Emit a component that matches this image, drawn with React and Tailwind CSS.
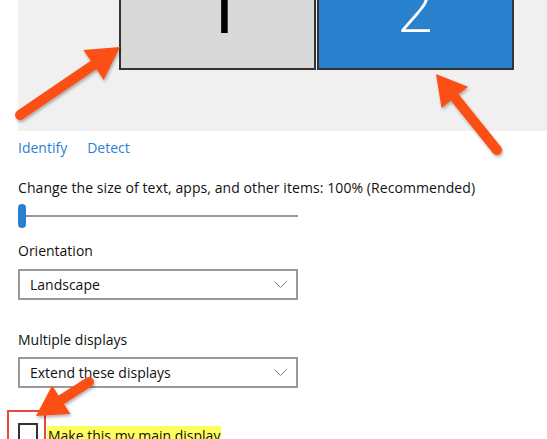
import { ChevronDown } from 'lucide-react';

function Arrow({ tail, tip, head = 30, half = 17 }) {
    const dx = tip[0] - tail[0];
    const dy = tip[1] - tail[1];
    const len = Math.hypot(dx, dy);
    const ux = dx / len;
    const uy = dy / len;
    const bx = tip[0] - ux * head;
    const by = tip[1] - uy * head;
    const nx = -uy;
    const ny = ux;
    const pts = `${tip[0]},${tip[1]} ${bx + nx * half},${by + ny * half} ${bx - nx * half},${by - ny * half}`;
    return (
        <g filter="url(#arrowShadow)">
            <line x1={tail[0]} y1={tail[1]} x2={bx + ux * 4} y2={by + uy * 4} stroke="#fb5017" strokeWidth="10" strokeLinecap="round" />
            <polygon points={pts} fill="#fb5017" strokeLinejoin="round" />
        </g>
    );
}

function Dropdown({ value }) {
    return (
        <div className="w-[280px] h-[31px] border-2 border-[#999999] flex items-center justify-between pl-[10px] pr-[9px]">
            <span className="text-[14px] leading-[20px] text-[#111]">{value}</span>
            <svg width="13" height="8" viewBox="0 0 13 8">
                <polyline points="0.5,0.5 6.5,6.5 12.5,0.5" fill="none" stroke="#7a7a7a" strokeWidth="1" />
            </svg>
        </div>
    );
}

export default function App() {
    return (
        <div className="relative w-[547px] h-[439px] overflow-hidden bg-white font-['Open_Sans',sans-serif] text-[#111]">
            {/* Monitor arrangement */}
            <div className="ml-[18px] h-[131px] bg-[#f0f0f0] flex items-start pl-[101px]">
                <div className="w-[197px] h-[70px] border-x-2 border-b-2 border-[#333] bg-[#d9d9d9] overflow-hidden flex justify-center">
                    <span className="mt-[-29px] pl-[4px] text-[72px] leading-none font-['Inter',sans-serif] font-normal text-black">1</span>
                </div>
                <div className="ml-[1px] w-[197px] h-[70px] border-x-2 border-b-2 border-[#333] bg-[#2a82ce] overflow-hidden flex justify-center">
                    <span className="mt-[-23px] text-[64px] leading-none font-['Inter',sans-serif] font-extralight text-white">2</span>
                </div>
            </div>

            <div className="pl-[18px]">
                <div className="mt-[7px] flex gap-[20px] text-[14px] leading-[20px] text-[#2b7fd3]">
                    <span>Identify</span>
                    <span>Detect</span>
                </div>

                <p className="mt-[20px] text-[14px] leading-[20px] tracking-[0.08px]">
                    Change the size of text, apps, and other items: 100% (Recommended)
                </p>

                <div className="mt-[6px] w-[280px] h-[24px] flex items-center">
                    <div className="w-[8px] h-[24px] rounded-[4px] bg-[#2b7fd0]" />
                    <div className="flex-1 h-[2px] bg-[#999999]" />
                </div>

                <p className="mt-[13px] text-[14px] leading-[20px]">Orientation</p>
                <div className="mt-[8px]">
                    <Dropdown value="Landscape" />
                </div>

                <p className="mt-[30px] text-[14px] leading-[20px]">Multiple displays</p>
                <div className="mt-[7px]">
                    <Dropdown value="Extend these displays" />
                </div>

                <div className="mt-[35px] flex items-start gap-[9px]">
                    <div className="w-[20px] h-[20px] border-2 border-[#333]" />
                    <span className="mt-[3px] text-[14px] leading-[20px] bg-[#ffff5c] px-[1px]">Make this my main display</span>
                </div>
            </div>

            {/* Annotation: red frame around checkbox */}
            <div className="absolute left-[7px] top-[410px] w-[39px] h-[40px] border-2 border-[#e8473f]" />

            {/* Annotation arrows */}
            <svg className="absolute inset-0 pointer-events-none" width="547" height="439">
                <defs>
                    <filter id="arrowShadow" x="-20%" y="-20%" width="140%" height="140%">
                        <feDropShadow dx="1" dy="2" stdDeviation="1.5" floodColor="#000" floodOpacity="0.3" />
                    </filter>
                </defs>
                <Arrow tail={[20, 115]} tip={[120, 47]} head={32} half={18} />
                <Arrow tail={[497, 150]} tip={[436, 74]} />
                <Arrow tail={[89, 382]} tip={[36, 416]} />
            </svg>
        </div>
    );
}
